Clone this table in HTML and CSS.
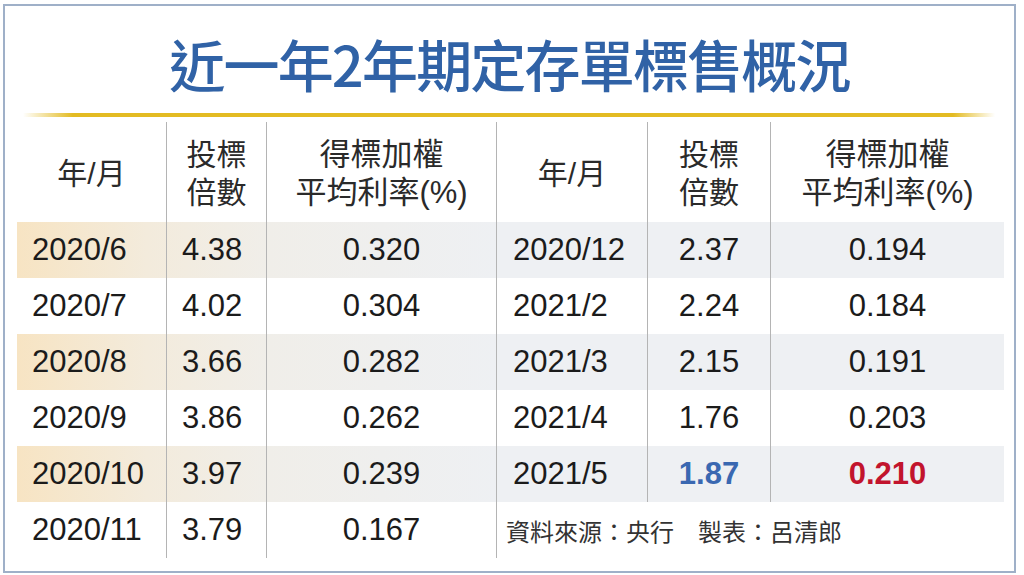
FILE: index.html
```html
<!DOCTYPE html>
<html lang="zh-Hant">
<head>
<meta charset="utf-8">
<title>近一年2年期定存單標售概況</title>
<link rel="stylesheet" href="styles.css">
</head>
<body>
<div class="frame">
  <h1 class="title">近一年2年期定存單標售概況</h1>
  <div class="rule"></div>
  <div class="table">
    <div class="row head">
      <div class="c c1 h">年/月</div>
      <div class="c c2 h">投標<br>倍數</div>
      <div class="c c3 h">得標加權<br>平均利率(%)</div>
      <div class="c c4 h">年/月</div>
      <div class="c c5 h">投標<br>倍數</div>
      <div class="c c6 h">得標加權<br>平均利率(%)</div>
    </div>
    <div class="row shade">
      <div class="c c1 l">2020/6</div>
      <div class="c c2 l">4.38</div>
      <div class="c c3">0.320</div>
      <div class="c c4 l">2020/12</div>
      <div class="c c5">2.37</div>
      <div class="c c6">0.194</div>
    </div>
    <div class="row">
      <div class="c c1 l">2020/7</div>
      <div class="c c2 l">4.02</div>
      <div class="c c3">0.304</div>
      <div class="c c4 l">2021/2</div>
      <div class="c c5">2.24</div>
      <div class="c c6">0.184</div>
    </div>
    <div class="row shade">
      <div class="c c1 l">2020/8</div>
      <div class="c c2 l">3.66</div>
      <div class="c c3">0.282</div>
      <div class="c c4 l">2021/3</div>
      <div class="c c5">2.15</div>
      <div class="c c6">0.191</div>
    </div>
    <div class="row">
      <div class="c c1 l">2020/9</div>
      <div class="c c2 l">3.86</div>
      <div class="c c3">0.262</div>
      <div class="c c4 l">2021/4</div>
      <div class="c c5">1.76</div>
      <div class="c c6">0.203</div>
    </div>
    <div class="row shade">
      <div class="c c1 l">2020/10</div>
      <div class="c c2 l">3.97</div>
      <div class="c c3">0.239</div>
      <div class="c c4 l">2021/5</div>
      <div class="c c5 blue">1.87</div>
      <div class="c c6 red">0.210</div>
    </div>
    <div class="row last">
      <div class="c c1 l">2020/11</div>
      <div class="c c2 l">3.79</div>
      <div class="c c3">0.167</div>
      <div class="c c4 source">資料來源：央行　製表：呂清郎</div>
    </div>
  </div>
</div>
</body>
</html>
```

FILE: styles.css
```css
html, body {
  margin: 0;
  padding: 0;
  background: #ffffff;
}
body {
  width: 1024px;
  height: 575px;
  overflow: hidden;
  font-family: "Liberation Sans", "Noto Sans CJK TC", sans-serif;
}
.frame {
  box-sizing: border-box;
  margin: 4px 8px 0 3px;
  height: 569px;
  border: 2px solid #9fb0c8;
  display: flex;
  flex-direction: column;
}
.title {
  margin: 29px 0 0 0;
  font-family: "Noto Sans CJK TC", sans-serif;
  font-size: 56px;
  line-height: 56px;
  font-weight: 500;
  color: #3062a6;
  text-align: center;
  letter-spacing: -1.8px;
}
.rule {
  margin: 22px 19px 0 18px;
  height: 4px;
  background: linear-gradient(to right, rgba(228,188,30,0) 0px, #e3bb22 50px, #e3bb22 930px, rgba(228,188,30,0) 100%);
}
.table {
  margin: 5px 10px 0 12px;
  display: flex;
  flex-direction: column;
}
.row {
  display: grid;
  grid-template-columns: 149px 100px 230px 151px 123px 234px;
  height: 56px;
}
.row.head {
  height: 100px;
}
.row.shade {
  background: linear-gradient(to right, #f7e4c3 0px, #f3ebdc 130px, #f0eee9 250px, #eef0f3 480px, #eef0f3 100%);
}
.c {
  display: flex;
  align-items: center;
  justify-content: center;
  font-size: 31px;
  color: #1b1b1b;
  white-space: nowrap;
}
.c.l {
  justify-content: flex-start;
  padding-left: 15px;
}
.c4.l {
  padding-left: 16px;
}
.c2, .c3, .c4, .c5, .c6 {
  border-left: 1px solid #b4b4b4;
}
.h {
  font-family: "Liberation Sans", "Noto Sans CJK TC", sans-serif;
  font-size: 30px;
  line-height: 38px;
  color: #2a2a2a;
  text-align: center;
  white-space: normal;
  padding-top: 4px;
}
.c3.h, .c6.h {
  font-size: 31px;
}
.blue {
  color: #3a68b1;
  font-weight: 700;
}
.red {
  color: #c2142d;
  font-weight: 700;
}
.source {
  grid-column: 4 / 7;
  justify-content: flex-start;
  padding-left: 9px;
  font-size: 24px;
  color: #333333;
}
```
